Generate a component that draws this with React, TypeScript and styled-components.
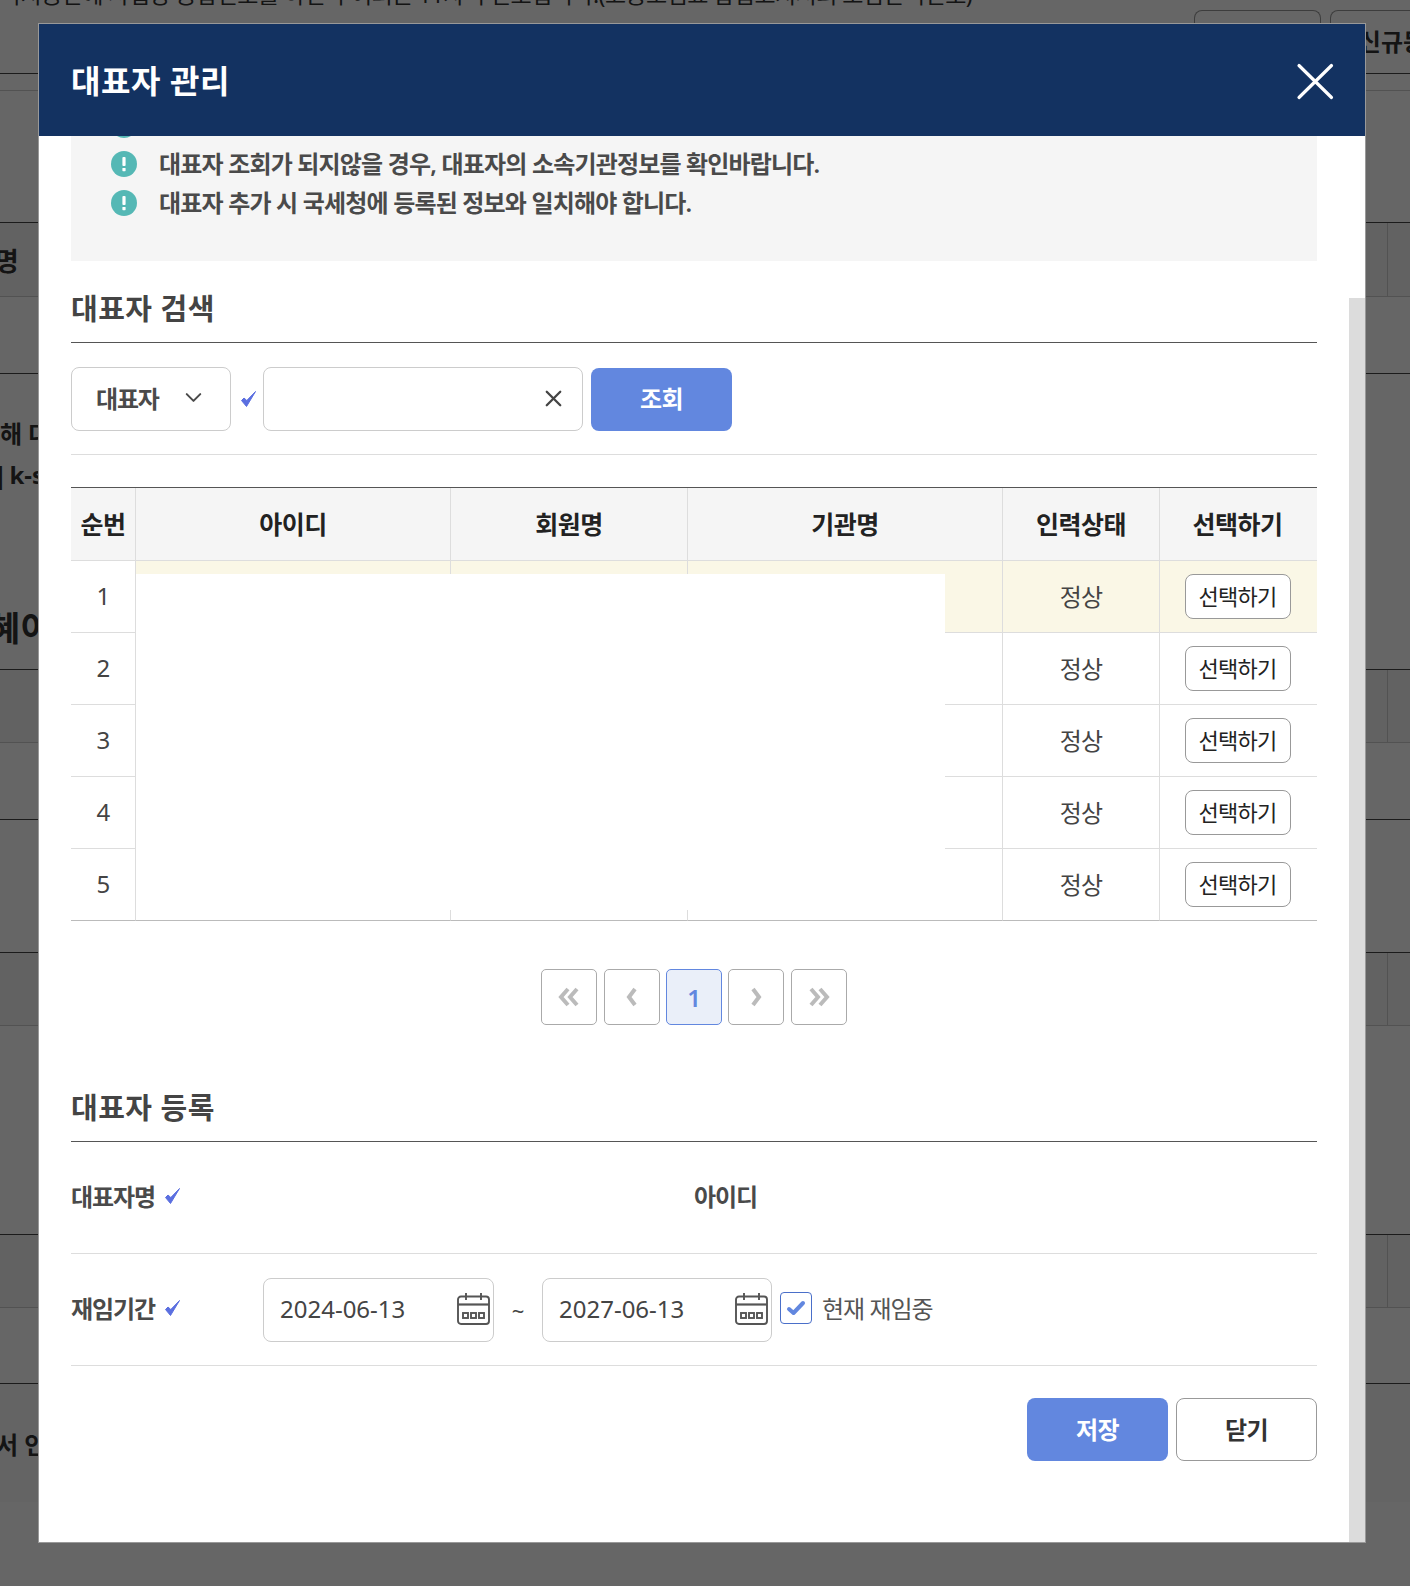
import styled, { createGlobalStyle } from 'styled-components'
import { ChevronDown, X } from 'lucide-react'

const GlobalStyle = createGlobalStyle`
    * { box-sizing: border-box; }
    html, body {
        margin: 0;
        padding: 0;
        background: #fff;
    }
    body {
        font-family: "Noto Sans", "Noto Sans CJK KR", sans-serif;
        color: #333;
    }
`

const Page = styled.div`
    position: relative;
    width: 1410px;
    height: 1586px;
    overflow: hidden;
`

/* page lying under the dimmed backdrop */
const BehindToolbar = styled.div`
    display: flex;
    height: 74px;
    border-bottom: 1px solid #444;
`
const BehindNote = styled.div`
    flex: 0 0 1185px;
    margin-top: -24px;
    font-size: 23px;
    letter-spacing: -0.57px;
    line-height: 36px;
    white-space: nowrap;
    color: #333;
    overflow: hidden;
`
const BehindButton = styled.div`
    flex: 0 0 ${props => props.$width}px;
    margin: 10px 0 0 9px;
    border: 1px solid #999;
    border-bottom: 0;
    border-radius: 8px 8px 0 0;
    padding-top: 13px;
    text-align: center;
    font-size: 24px;
    font-weight: 700;
    line-height: 36px;
    white-space: nowrap;
`
const BehindRow = styled.div`
    display: flex;
    align-items: center;
    height: ${props => props.$height}px;
    background: ${props => props.$tint || 'transparent'};
    border-bottom: 1px solid ${props => props.$line || 'transparent'};
`
const BehindCell = styled.div`
    margin-left: auto;
    width: 23px;
    height: 100%;
    border-left: 1px solid #ccc;
`
const BehindLabel = styled.span`
    margin-left: ${props => props.$shift}px;
    font-size: 26px;
    font-weight: 700;
    white-space: nowrap;
`
const BehindBlock = styled.div`
    height: 296px;
    padding-top: 39px;
    border-bottom: 1px solid #444;
`
const BehindLine = styled.div`
    margin: ${props => props.$top || 0}px 0 0 ${props => props.$shift}px;
    font-size: 24px;
    font-weight: 700;
    line-height: 41px;
    word-spacing: ${props => props.$tight || 0}px;
    white-space: nowrap;
`
const BehindHeading = styled.div`
    margin: 113px 0 0 -11px;
    font-size: 34px;
    font-weight: 700;
    line-height: 40px;
    white-space: nowrap;
`

const Backdrop = styled.div`
    position: absolute;
    inset: 0;
    padding: 23px 0 0 38px;
    background: rgba(0, 0, 0, 0.6);
`
const Modal = styled.div`
    width: 1328px;
    height: 1520px;
    display: flex;
    flex-direction: column;
    background: #fff;
    border: 1px solid #999;
    font-family: "Noto Sans", "Noto Sans CJK KR", sans-serif;
`
const ModalHeader = styled.div`
    flex: 0 0 112px;
    display: flex;
    justify-content: space-between;
    align-items: center;
    padding: 0 32px;
    background: #133261;
    color: #fff;
    h1 {
        margin: 2px 0 0;
        font-size: 32px;
        font-weight: 700;
        line-height: 1.2;
        letter-spacing: 0.6px;
    }
`
const CloseIcon = styled.svg`
    display: block;
    width: 38px;
    height: 38px;
    margin: 2px -1px 0 0;
`
const ModalBody = styled.div`
    flex: 1;
    min-height: 0;
    display: flex;
`
const Content = styled.div`
    flex: 1;
    min-width: 0;
    padding: 0 32px;
    overflow: hidden;
`
const ScrollRail = styled.div`
    flex: 0 0 16px;
    padding-top: 162px;
`
const ScrollThumb = styled.div`
    height: 100%;
    background: #dcdcdc;
`

const NoticeBox = styled.div`
    height: 125px;
    background: #f5f5f5;
    overflow: hidden;
`
const NoticeList = styled.ul`
    list-style: none;
    margin: -31px 0 0;
    padding: 0 0 0 40px;
`
const NoticeItem = styled.li`
    display: flex;
    align-items: center;
    gap: 22px;
    height: 39px;
    font-size: 24px;
    font-weight: 600;
    color: #4a4a4a;
    letter-spacing: -0.83px;
    white-space: nowrap;
    span {
        margin-top: -3px;
    }
`
const NoticeIcon = styled.svg`
    flex: 0 0 26px;
    width: 26px;
    height: 26px;
`

const SectionTitle = styled.h2`
    height: 82px;
    margin: ${props => props.$gap || 0}px 0 0;
    padding-top: 29px;
    border-bottom: 1px solid #555;
    font-size: 29px;
    font-weight: 700;
    line-height: 38px;
    color: #444;
    letter-spacing: 0.5px;
`

const SearchRow = styled.div`
    display: flex;
    align-items: center;
    height: 112px;
    border-bottom: 1px solid #ddd;
`
const SelectBox = styled.div`
    flex: 0 0 160px;
    display: flex;
    justify-content: space-between;
    align-items: center;
    height: 64px;
    padding: 0 23px 2px 24px;
    border: 1px solid #ccc;
    border-radius: 8px;
    font-size: 24px;
    font-weight: 600;
    color: #4a4a4a;
    letter-spacing: -1.2px;
`
const TickSlot = styled.div`
    flex: 0 0 32px;
    display: flex;
    justify-content: center;
    align-items: center;
    padding-left: 3px;
`
const Tick = styled.svg`
    display: block;
    width: 17px;
    height: 18px;
`
const SearchInput = styled.div`
    flex: 0 0 320px;
    display: flex;
    justify-content: flex-end;
    align-items: center;
    height: 64px;
    padding-right: 15px;
    border: 1px solid #ccc;
    border-radius: 8px;
    color: #444;
`
const PrimaryButton = styled.button`
    flex: 0 0 141px;
    height: 63px;
    margin: ${props => (props.$gap ? '1px 0 0 8px' : 0)};
    padding: 0 0 3px;
    border: 0;
    border-radius: 8px;
    background: #6287df;
    color: #fff;
    font: inherit;
    font-size: 24px;
    font-weight: 700;
    letter-spacing: -0.6px;
`

const TableWrap = styled.div`
    position: relative;
    margin-top: 32px;
`
const Table = styled.table`
    width: 1246px;
    table-layout: fixed;
    border-collapse: separate;
    border-spacing: 0;
    border-top: 1px solid #555;
`
const Th = styled.th`
    height: 73px;
    padding: 0 ${props => (props.$last ? 2 : 0)}px 3px 0;
    background: #f5f5f5;
    border-bottom: 1px solid #ddd;
    border-right: ${props => (props.$last ? 0 : '1px solid #ddd')};
    font-size: 25px;
    font-weight: 700;
    color: #222;
    letter-spacing: -0.5px;
    width: ${props => props.$width}px;
`
const Td = styled.td`
    height: 72px;
    padding: 0 ${props => (props.$last ? 2 : 0)}px 2px 0;
    text-align: center;
    background: ${props => (props.$selected ? '#faf7e6' : '#fff')};
    border-bottom: 1px solid ${props => (props.$end ? '#bbb' : '#ddd')};
    border-right: ${props => (props.$last ? 0 : '1px solid #ddd')};
    font-size: 24px;
    color: #444;
    letter-spacing: -0.9px;
`
const Redaction = styled.div`
    position: absolute;
    left: 65px;
    top: 87px;
    width: 809px;
    height: 336px;
    background: #fff;
`
const PickButton = styled.button`
    display: block;
    width: 106px;
    height: 45px;
    margin: 2px auto 0;
    padding: 0 0 4px;
    background: #fff;
    border: 1px solid #999;
    border-radius: 8px;
    color: #222;
    font: inherit;
    font-size: 22px;
    letter-spacing: -0.7px;
    white-space: nowrap;
`

const Pagination = styled.div`
    display: flex;
    justify-content: center;
    gap: 6.3px;
    margin-top: 48px;
`
const PageButton = styled.div`
    display: flex;
    justify-content: center;
    align-items: center;
    width: 56px;
    height: 56px;
    border: 1px solid ${props => (props.$active ? '#6287df' : '#aaa')};
    border-radius: 5px;
    background: ${props => (props.$active ? '#eaeff9' : '#fff')};
    color: #6287df;
    font-size: 24px;
    font-weight: 600;
`
const PageArrow = styled.svg`
    display: block;
    width: 22px;
    height: 20px;
`

const FormRow = styled.div`
    display: flex;
    align-items: center;
    height: 112px;
    border-bottom: 1px solid #ddd;
`
const FormLabel = styled.div`
    flex: 0 0 ${props => props.$width}px;
    display: flex;
    align-items: center;
    gap: 9px;
    padding-bottom: 4px;
    font-size: 24px;
    font-weight: 600;
    color: #4a4a4a;
    letter-spacing: -1.1px;
    white-space: nowrap;
`
const DateInput = styled.div`
    flex: 0 0 ${props => props.$width}px;
    display: flex;
    justify-content: space-between;
    align-items: center;
    height: 64px;
    padding: 0 3px 0 16px;
    border: 1px solid #ccc;
    border-radius: 8px;
    font-size: 24px;
    color: #444;
    span {
        margin-top: -2px;
    }
`
const CalendarIcon = styled.svg`
    display: block;
    width: 33px;
    height: 33px;
    margin-top: -3px;
`
const Tilde = styled.div`
    flex: 0 0 48px;
    text-align: center;
    font-size: 22px;
    color: #444;
`
const CheckBox = styled.div`
    flex: 0 0 32px;
    display: flex;
    justify-content: center;
    align-items: center;
    height: 32px;
    margin: -4px 10px 0 8px;
    border: 1px solid #4a6fc9;
    border-radius: 4px;
`
const CheckLabel = styled.span`
    margin-top: -4px;
    font-size: 24px;
    color: #555;
    letter-spacing: -1px;
    white-space: nowrap;
`
const Actions = styled.div`
    display: flex;
    justify-content: flex-end;
    gap: 8px;
    margin-top: 32px;
`
const GhostButton = styled.button`
    flex: 0 0 141px;
    height: 63px;
    padding: 0 0 3px;
    background: #fff;
    border: 1px solid #999;
    border-radius: 8px;
    color: #333;
    font: inherit;
    font-size: 24px;
    font-weight: 700;
    letter-spacing: -0.6px;
`

const columns = [
    { label: '순번', width: 65 },
    { label: '아이디', width: 315 },
    { label: '회원명', width: 237 },
    { label: '기관명', width: 315 },
    { label: '인력상태', width: 157 },
    { label: '선택하기', width: 157 },
]
const rows = [1, 2, 3, 4, 5]

const BlueTick = () => (
    <Tick viewBox="0 0 17 18">
        <path d="M1.5 10.5 L6.5 16.5 L15.5 1.5 L6.8 10.5 L4 8 Z" fill="#5b6fe0" stroke="#5b6fe0" strokeWidth="1" strokeLinejoin="round" />
    </Tick>
)

const Notice = ({ text }: { text?: string }) => (
    <NoticeItem>
        <NoticeIcon viewBox="0 0 26 26">
            <circle cx="13" cy="13" r="13" fill="#55b8b5" />
            <rect x="11.4" y="6" width="3.2" height="9" rx="1" fill="#fff" />
            <rect x="11.4" y="17" width="3.2" height="3.2" rx="0.6" fill="#fff" />
        </NoticeIcon>
        {text && <span>{text}</span>}
    </NoticeItem>
)

const Calendar = () => (
    <CalendarIcon viewBox="0 0 33 33" fill="none" stroke="#555" strokeWidth="1.9">
        <rect x="1" y="4.5" width="31" height="27.5" rx="3" />
        <path d="M1 12.5 H32" strokeWidth="2.2" />
        <path d="M9 1 V8 M24 1 V8" />
        <rect x="6" y="21" width="5" height="5" />
        <rect x="14" y="21" width="5" height="5" />
        <rect x="22" y="21" width="5" height="5" />
    </CalendarIcon>
)

const Arrow = ({ d }: { d: string }) => (
    <PageArrow viewBox="0 0 22 20" fill="none" stroke="#bbb" strokeWidth="4">
        <path d={d} />
    </PageArrow>
)

const App = () => {
    return (
        <Page>
            <GlobalStyle />
            <BehindToolbar>
                <BehindNote>국지공단에 사업장 공납번호를 하면 부여되는 11자리 번호입니다.(고용보험료 납입고지서의 보험관리번호)</BehindNote>
                <BehindButton $width={127} />
                <BehindButton $width={146}>신규등록</BehindButton>
            </BehindToolbar>
            <BehindRow $height={17} $line="#ccc" />
            <BehindRow $height={132} $line="#444" />
            <BehindRow $height={74} $tint="#f5f5f5" $line="#ccc">
                <BehindLabel $shift={-77}>대표자명</BehindLabel>
                <BehindCell />
            </BehindRow>
            <BehindRow $height={77} $line="#444" />
            <BehindBlock>
                <BehindLine $shift={0}>해 다</BehindLine>
                <BehindLine $shift={-6} $tight={-4}>| k-sure</BehindLine>
                <BehindHeading>혜이</BehindHeading>
            </BehindBlock>
            <BehindRow $height={73} $tint="#f5f5f5" $line="#ccc">
                <BehindCell />
            </BehindRow>
            <BehindRow $height={77} $line="#444" />
            <BehindRow $height={133} $line="#444" />
            <BehindRow $height={73} $tint="#f5f5f5" $line="#ccc">
                <BehindCell />
            </BehindRow>
            <BehindRow $height={209} $line="#444" />
            <BehindRow $height={73} $tint="#f5f5f5" $line="#ccc">
                <BehindCell />
            </BehindRow>
            <BehindRow $height={76} $line="#444" />
            <BehindRow $height={118} $tint="#fafafa">
                <BehindLine $shift={-4} $top={3}>서 인</BehindLine>
            </BehindRow>

            <Backdrop>
                <Modal>
                    <ModalHeader>
                        <h1>대표자 관리</h1>
                        <CloseIcon viewBox="0 0 38 38" stroke="#fff" strokeWidth="3.2" strokeLinecap="round">
                            <path d="M3 3.5 L35.5 35.5 M35.5 3.5 L3 35.5" />
                        </CloseIcon>
                    </ModalHeader>
                    <ModalBody>
                        <Content>
                            <NoticeBox>
                                <NoticeList>
                                    <Notice />
                                    <Notice text="대표자 조회가 되지않을 경우, 대표자의 소속기관정보를 확인바랍니다." />
                                    <Notice text="대표자 추가 시 국세청에 등록된 정보와 일치해야 합니다." />
                                </NoticeList>
                            </NoticeBox>

                            <SectionTitle>대표자 검색</SectionTitle>
                            <SearchRow>
                                <SelectBox>
                                    대표자
                                    <ChevronDown size={27} strokeWidth={1.8} />
                                </SelectBox>
                                <TickSlot><BlueTick /></TickSlot>
                                <SearchInput>
                                    <X size={27} strokeWidth={2} />
                                </SearchInput>
                                <PrimaryButton $gap={8}>조회</PrimaryButton>
                            </SearchRow>

                            <TableWrap>
                                <Table>
                                    <thead>
                                        <tr>
                                            {columns.map((col, i) => (
                                                <Th key={col.label} $width={col.width} $last={i === columns.length - 1}>{col.label}</Th>
                                            ))}
                                        </tr>
                                    </thead>
                                    <tbody>
                                        {rows.map(n => (
                                            <tr key={n}>
                                                <Td $end={n === 5}>{n}</Td>
                                                <Td $end={n === 5} $selected={n === 1} />
                                                <Td $end={n === 5} $selected={n === 1} />
                                                <Td $end={n === 5} $selected={n === 1} />
                                                <Td $end={n === 5} $selected={n === 1}>정상</Td>
                                                <Td $end={n === 5} $selected={n === 1} $last>
                                                    <PickButton>선택하기</PickButton>
                                                </Td>
                                            </tr>
                                        ))}
                                    </tbody>
                                </Table>
                                <Redaction />
                            </TableWrap>

                            <Pagination>
                                <PageButton><Arrow d="M10 2 L3 10 L10 18 M19 2 L12 10 L19 18" /></PageButton>
                                <PageButton><Arrow d="M14 2 L8 10 L14 18" /></PageButton>
                                <PageButton $active>1</PageButton>
                                <PageButton><Arrow d="M8 2 L14 10 L8 18" /></PageButton>
                                <PageButton><Arrow d="M3 2 L10 10 L3 18 M12 2 L19 10 L12 18" /></PageButton>
                            </Pagination>

                            <SectionTitle $gap={35}>대표자 등록</SectionTitle>
                            <FormRow>
                                <FormLabel $width={623}>대표자명 <BlueTick /></FormLabel>
                                <FormLabel $width={200}>아이디</FormLabel>
                            </FormRow>
                            <FormRow>
                                <FormLabel $width={192}>재임기간 <BlueTick /></FormLabel>
                                <DateInput $width={231}><span>2024-06-13</span><Calendar /></DateInput>
                                <Tilde>~</Tilde>
                                <DateInput $width={230}><span>2027-06-13</span><Calendar /></DateInput>
                                <CheckBox>
                                    <svg width="20" height="16" viewBox="0 0 20 16" fill="none" stroke="#6287df" strokeWidth="4" strokeLinecap="round" strokeLinejoin="round">
                                        <path d="M3 9 L7.5 13 L17 3" />
                                    </svg>
                                </CheckBox>
                                <CheckLabel>현재 재임중</CheckLabel>
                            </FormRow>
                            <Actions>
                                <PrimaryButton>저장</PrimaryButton>
                                <GhostButton>닫기</GhostButton>
                            </Actions>
                        </Content>
                        <ScrollRail><ScrollThumb /></ScrollRail>
                    </ModalBody>
                </Modal>
            </Backdrop>
        </Page>
    )
}

export default App
